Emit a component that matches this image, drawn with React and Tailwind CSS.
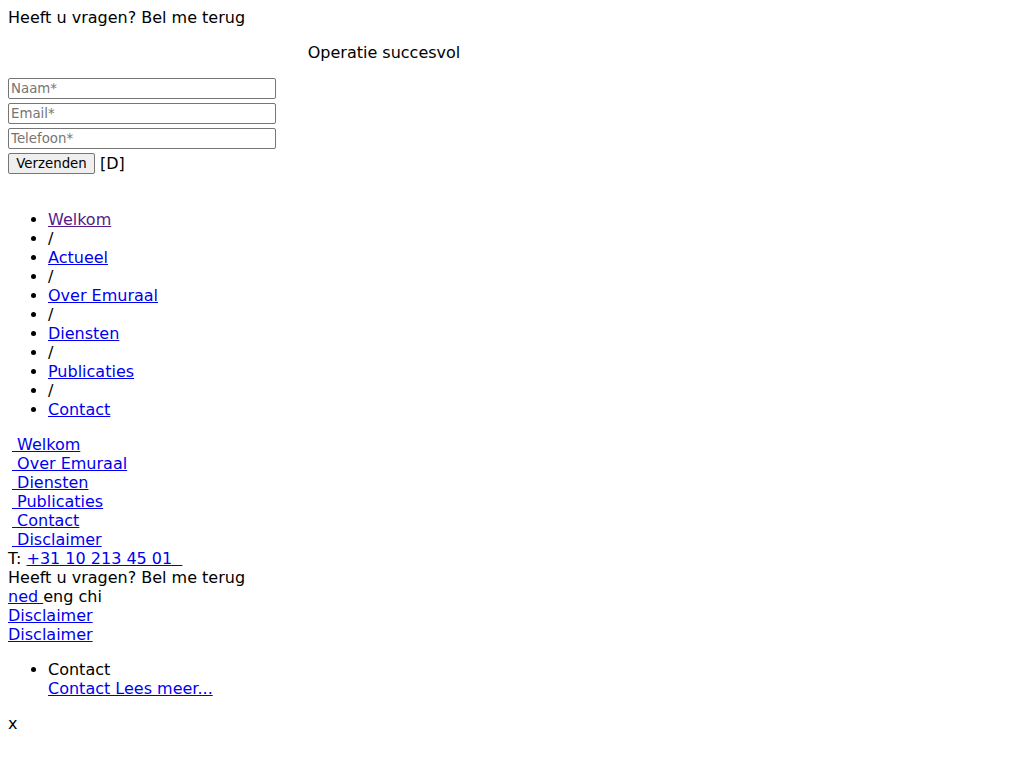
import React from "react";

const crumbs = ["Welkom", "Actueel", "Over Emuraal", "Diensten", "Publicaties", "Contact"];
const footerLinks = ["Welkom", "Over Emuraal", "Diensten", "Publicaties", "Contact", "Disclaimer"];

const link = "text-[#0000ee] underline";

const App = () => (
  <div className="m-2 font-['DejaVu_Sans',sans-serif] text-[16px] leading-[19px] text-black">
    <div>Heeft u vragen? Bel me terug</div>
    <div className="w-[752px] text-center my-4">Operatie succesvol</div>

    <form className="flex flex-col gap-[4px]">
      {["Naam*", "Email*", "Telefoon*"].map((p) => (
        <input
          key={p}
          type="text"
          placeholder={p}
          className="w-[268px] h-[21px] px-[2px] py-[1px] border border-[#767676] rounded-[2px] text-[13.33px] leading-[normal] placeholder:text-[#757575]"
        />
      ))}
      <div className="flex items-center gap-[5px]">
        <button
          type="button"
          className="w-[87px] h-[21px] bg-[#efefef] border border-[#767676] rounded-[2px] text-[13.33px] leading-[normal]"
        >
          Verzenden
        </button>
        <span>[D]</span>
      </div>
    </form>

    <ul className="list-disc pl-10 mt-[36px] mb-4">
      {crumbs.map((c, i) => (
        <React.Fragment key={c}>
          {i > 0 && <li>/</li>}
          <li>
            <a href="#" className={i === 0 ? "text-[#551a8b] underline" : link}>
              {c}
            </a>
          </li>
        </React.Fragment>
      ))}
    </ul>

    {footerLinks.map((f) => (
      <div key={f} className="pl-[4px]">
        <a href="#" className={link}>
          {"\u00a0" + f}
        </a>
      </div>
    ))}
    <div>
      T: <a href="#" className={link}>{"+31 10 213 45 01\u00a0\u00a0"}</a>
    </div>
    <div>Heeft u vragen? Bel me terug</div>
    <div>
      <a href="#" className={link}>{"ned\u00a0"}</a>eng chi
    </div>
    <div>
      <a href="#" className={link}>Disclaimer</a>
    </div>
    <div>
      <a href="#" className={link}>Disclaimer</a>
    </div>

    <ul className="list-disc pl-10 my-4">
      <li>
        Contact
        <br />
        <a href="#" className={link}>Contact Lees meer...</a>
      </li>
    </ul>
    <div>x</div>
  </div>
);

export default App;
